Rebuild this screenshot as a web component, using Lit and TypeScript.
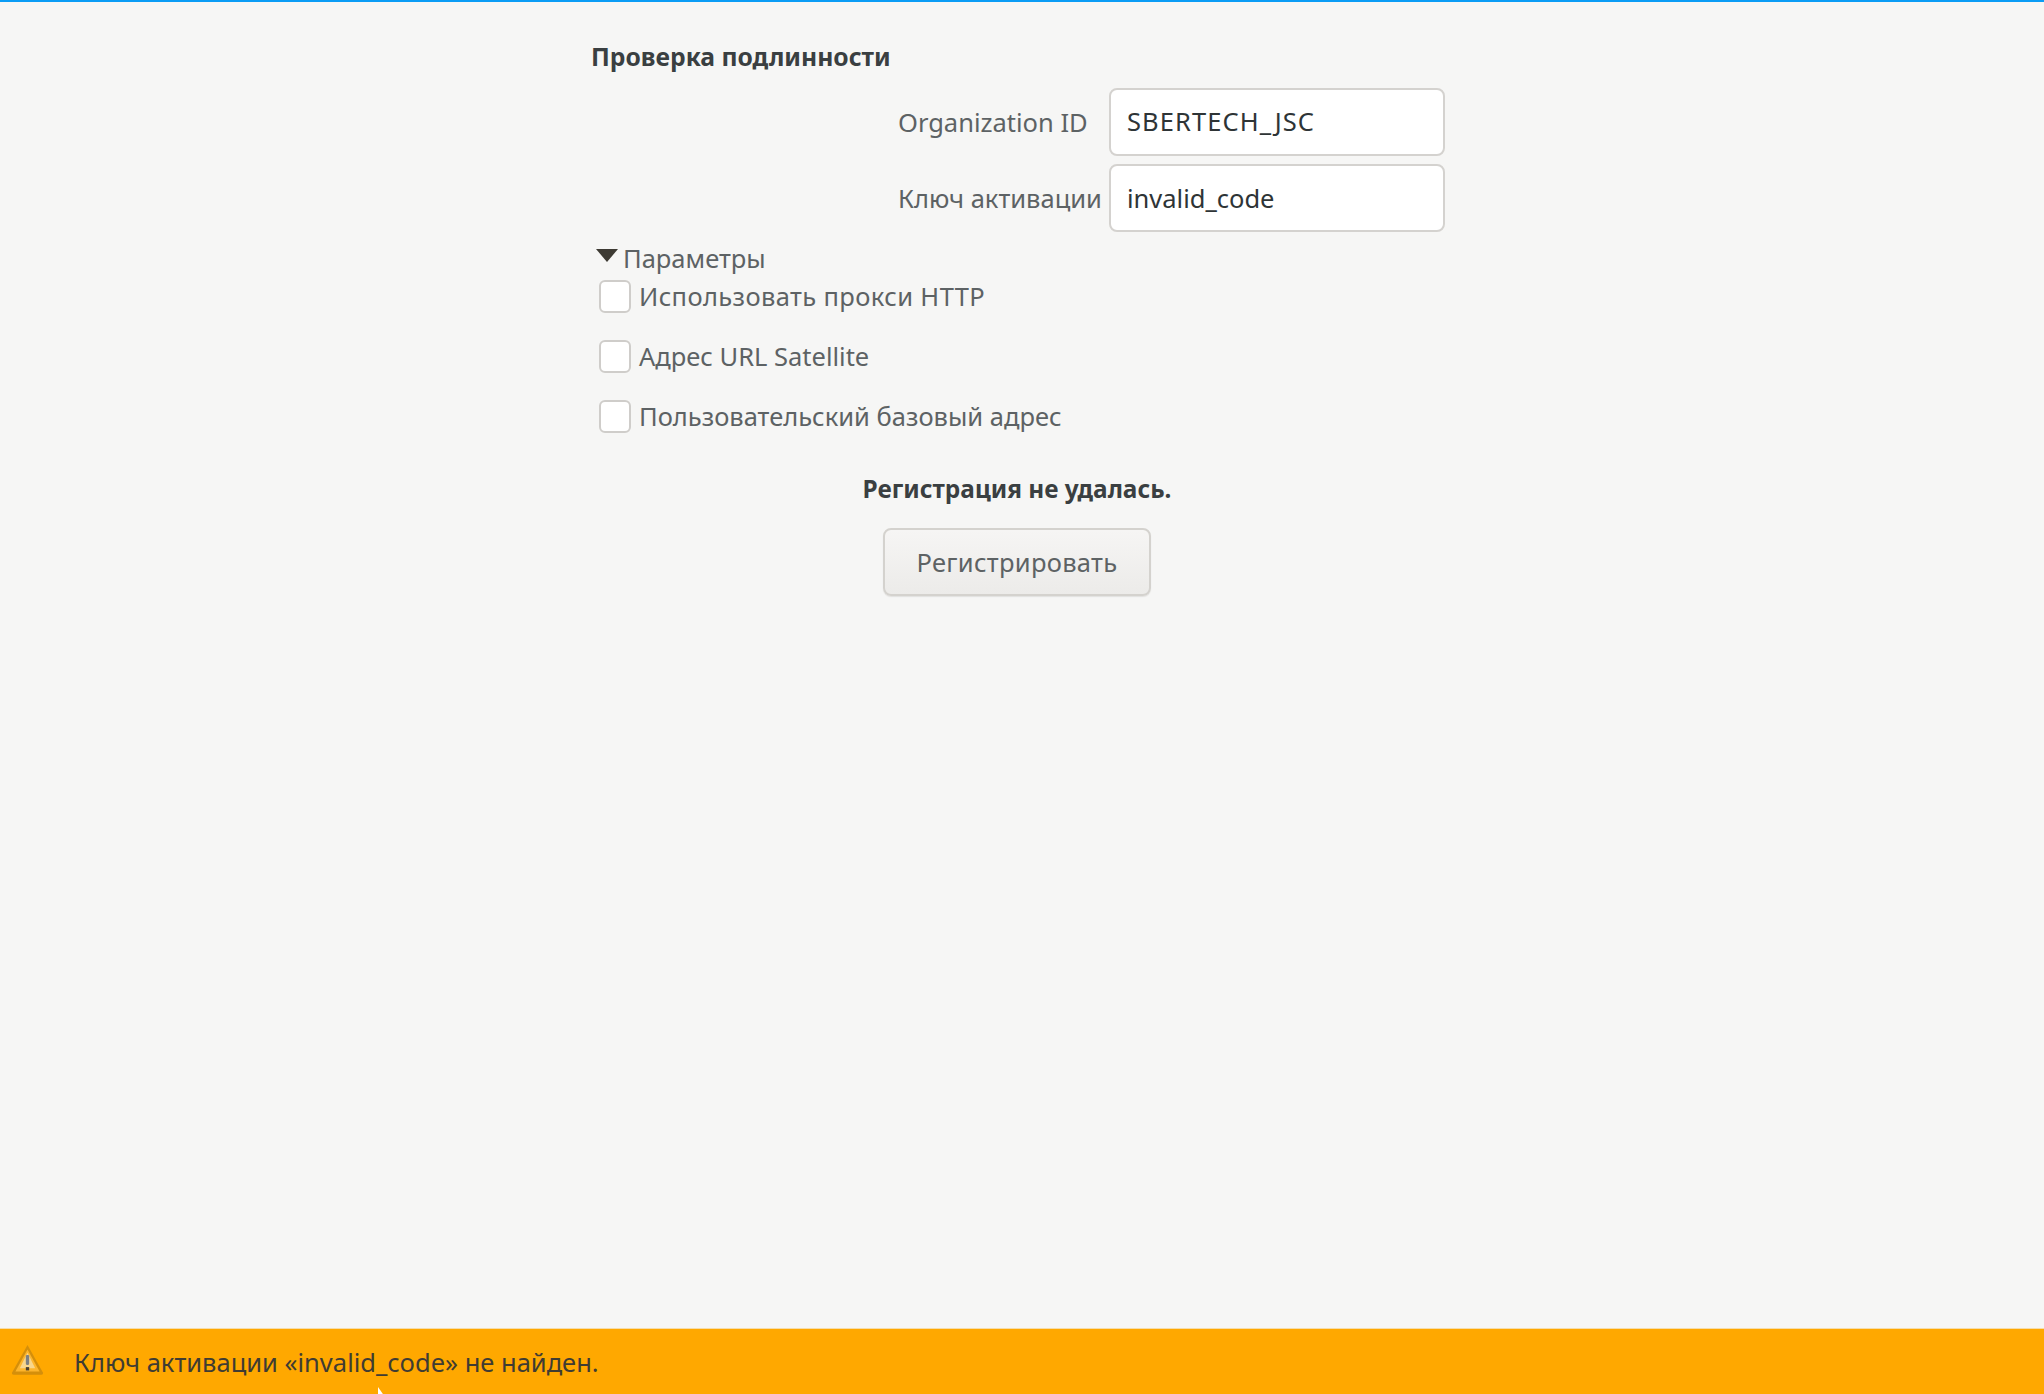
import { LitElement, html, css, svg } from "lit";
import { customElement } from "lit/decorators.js";

const warn = svg`<svg class="warn" viewBox="0 0 30 30" width="33" height="33">
  <path d="M15 1 L29 26 Q29.500 28 27.500 28 L2.500 28 Q0.500 28 1 26 Z" fill="#cf8c0c" opacity=".9"/>
  <path d="M15 5 L26 25 L4 25 Z" fill="#fdb52c"/>
  <path d="M15 8 L22 22 L8 22 Z" fill="#f8d68c"/>
  <rect x="13.500" y="10" width="3" height="9" rx="1" fill="#7d8082"/>
  <rect x="13.500" y="21" width="3" height="3" fill="#4a4030"/>
</svg>`;

@customElement("app-root")
export class AppRoot extends LitElement {
  static styles = css`
    :host {
      display: flex;
      flex-direction: column;
      height: 1394px;
      background: #f6f6f5;
      font-family: "Noto Sans", sans-serif;
      font-size: 25.5px;
      color: #2e3436;
      overflow: hidden;
      border-top: 2px solid #0a9cf5;
      box-sizing: border-box;
    }
    .form {
      flex: 1;
      width: 852px;
      margin-left: 591px;
      display: flex;
      flex-direction: column;
    }
    .heading {
      font-weight: 700;
      font-size: 24.7px;
      line-height: 32px;
      margin-top: 39px;
      color: #3a3f41;
    }
    .fields {
      display: flex;
      flex-direction: column;
      gap: 8px;
      margin-top: 15px;
      padding-left: 307px;
    }
    .row {
      display: grid;
      grid-template-columns: 211px 336px;
      align-items: center;
    }
    .label { color: #5d6264; white-space: nowrap; margin-top: -1px; }
    .input {
      box-sizing: border-box;
      height: 68px;
      background: #fff;
      border: 2px solid #d4d2cf;
      border-radius: 8px;
      padding: 0 16px;
      display: flex;
      align-items: center;
      color: #2e3436;
    }
    .caps { letter-spacing: 1.1px; padding-bottom: 2px; }
    .expander {
      display: flex;
      align-items: center;
      gap: 5px;
      margin: 9px 0 0 5px;
      line-height: 34px;
      color: #5d6264;
    }
    .arrow {
      width: 0;
      height: 0;
      border-left: 11px solid transparent;
      border-right: 11px solid transparent;
      border-top: 13px solid #3d3a33;
      margin-top: -5px;
    }
    .options {
      display: flex;
      flex-direction: column;
      gap: 27px;
      margin: 5px 0 0 8px;
    }
    .check {
      display: flex;
      align-items: center;
      gap: 8px;
      color: #5d6264;
      line-height: 33px;
    }
    .wide { letter-spacing: 0.38px; }
    .box {
      box-sizing: border-box;
      width: 32px;
      height: 33px;
      background: #fff;
      border: 2px solid #cfcdca;
      border-radius: 6px;
    }
    .status {
      align-self: center;
      font-weight: 700;
      font-size: 24.4px;
      margin-top: 39px;
      line-height: 34px;
      color: #3a3f41;
    }
    .button {
      align-self: center;
      box-sizing: border-box;
      width: 268px;
      height: 68px;
      margin-top: 22px;
      display: flex;
      align-items: center;
      justify-content: center;
      border: 2px solid #d4d2ce;
      border-radius: 8px;
      background: linear-gradient(#f6f5f4, #ecebe9);
      box-shadow: 0 1px 1px #e2e1df;
      color: #5d6264;
      letter-spacing: 0.3px;
    }
    .bar {
      position: relative;
      height: 66px;
      background: #ffa800;
      display: flex;
      align-items: center;
      gap: 30px;
      padding-left: 11px;
      border-top: 1px solid #f6dca8;
      box-sizing: border-box;
      color: #3f3c33;
    }
    .warn { flex: none; margin-top: -3px; }
    .cursor { position: absolute; left: 377px; top: 58px; }
  `;

  render() {
    return html`
      <div class="form">
        <div class="heading">Проверка подлинности</div>
        <div class="fields">
          <div class="row"><span class="label">Organization ID</span><div class="input caps">SBERTECH_JSC</div></div>
          <div class="row"><span class="label">Ключ активации</span><div class="input">invalid_code</div></div>
        </div>
        <div class="expander"><span class="arrow"></span><span>Параметры</span></div>
        <div class="options">
          <div class="check"><span class="box"></span><span class="wide">Использовать прокси HTTP</span></div>
          <div class="check"><span class="box"></span><span>Адрес URL Satellite</span></div>
          <div class="check"><span class="box"></span><span>Пользовательский базовый адрес</span></div>
        </div>
        <div class="status">Регистрация не удалась.</div>
        <div class="button">Регистрировать</div>
      </div>
      <div class="bar">
        ${warn}
        <span>Ключ активации «invalid_code» не найден.</span>
        <svg class="cursor" width="10" height="10" viewBox="0 0 10 10"><path d="M1 0 L1 10 L8 10 Z" fill="#fff"/></svg>
      </div>
    `;
  }
}
